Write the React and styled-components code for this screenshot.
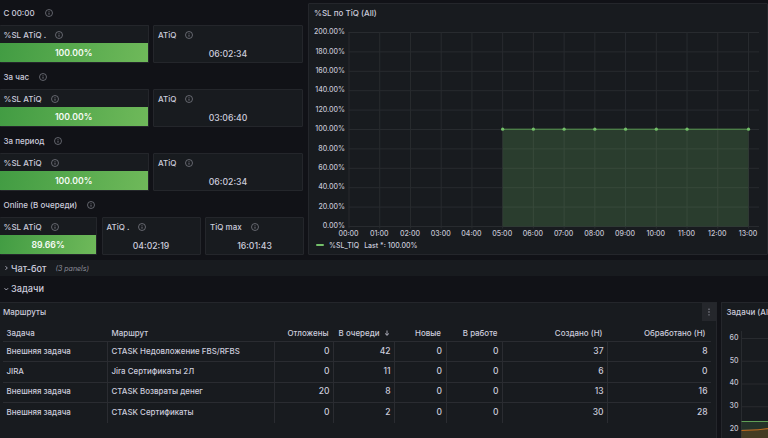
import React from "react";
import styled, { createGlobalStyle } from "styled-components";

const GlobalStyle = createGlobalStyle`
  * { box-sizing: border-box; }
  html, body { margin: 0; padding: 0; background: #111217; overflow: hidden; }
  body { font-family: Inter, "Liberation Sans", sans-serif; color: #ccccdc; }
`;

const Dashboard = styled.div`
  width: 768px;
  height: 438px;
  overflow: hidden;
  background: #111217;
  display: flex;
  flex-direction: column;
`;

const Overview = styled.section`
  display: flex;
  flex: none;
  height: 260px;
`;

const StatsColumn = styled.div`
  width: 308px;
  flex: none;
`;

const StatGroup = styled.div`
  height: 64px;
`;

const GroupTitle = styled.div`
  height: 25px;
  padding: 1px 0 0 3.5px;
  display: flex;
  align-items: center;
  gap: 10px;
  font-size: 8px;
  font-weight: 500;
  white-space: nowrap;
`;

const StatRow = styled.div`
  display: grid;
  grid-template-columns: ${(p) => (p.$three ? "97px 99px 99px" : "148.5px 150px")};
  column-gap: 4.5px;
  height: 38px;
`;

const Stat = styled.div`
  background: #181b1f;
  border: 1px solid #24262b;
  border-left-width: ${(p) => (p.$first ? 0 : 1)}px;
  border-radius: 1px;
  display: flex;
  flex-direction: column;
  overflow: hidden;
`;

const StatTitle = styled.div`
  height: 17px;
  flex: none;
  padding-left: ${(p) => (p.$first ? 3.5 : 4)}px;
  display: flex;
  align-items: center;
  gap: 9px;
  font-size: 8px;
  font-weight: 500;
  white-space: nowrap;
`;

const StatValue = styled.div`
  flex: 1;
  display: flex;
  align-items: center;
  justify-content: center;
  padding-top: ${(p) => (p.$green ? 0 : 3)}px;
  margin-bottom: ${(p) => (p.$green ? -1 : 0)}px;
  font-size: 8.7px;
  font-weight: ${(p) => (p.$green ? 600 : 500)};
  color: ${(p) => (p.$green ? "#f7fbf6" : "#ccccdc")};
  background: ${(p) => (p.$green ? "linear-gradient(100deg, #429c43, #6fb95a)" : "none")};
`;

const InfoSvg = styled.svg`
  width: 8px;
  height: 8px;
  flex: none;
  display: block;
`;

function Info() {
  return (
    <InfoSvg viewBox="0 0 8 8" fill="none" stroke="#8d8e99">
      <circle cx="4" cy="4" r="3.5" strokeWidth="0.65" />
      <path d="M4 3.6V5.7M4 2.2V2.9" strokeWidth="0.75" />
    </InfoSvg>
  );
}

const ChartPanel = styled.div`
  margin-top: 3px;
  width: 460px;
  height: 252px;
  background: #181b1f;
  border: 1px solid #24262b;
  border-radius: 1px;
`;

const PanelTitle = styled.div`
  height: 18px;
  padding-left: ${(p) => p.$pad}px;
  display: flex;
  align-items: center;
  font-size: 8px;
  font-weight: 500;
  white-space: nowrap;
`;

const Plot = styled.svg`
  display: block;
  overflow: hidden;
  font-family: Inter, "Liberation Sans", sans-serif;
  font-size: 7px;
  font-weight: 500;
  fill: #c4c4d3;
`;

const Legend = styled.div`
  display: flex;
  align-items: center;
  height: 14px;
  padding-left: 7px;
  gap: 5px;
  font-size: 7px;
  font-weight: 500;
  white-space: nowrap;
`;

const LegendMark = styled.span`
  width: 8px;
  height: 2px;
  flex: none;
  border-radius: 1px;
  background: #73bf69;
`;

const RowBar = styled.div`
  flex: none;
  height: ${(p) => (p.$open ? 26 : 16)}px;
  padding: 0 0 ${(p) => (p.$open ? 1 : 0)}px 4px;
  background: ${(p) => (p.$open ? "transparent" : "#181b1f")};
  display: flex;
  align-items: center;
  gap: 2px;
  font-size: 9.2px;
  font-weight: 500;
`;

const Chevron = styled.svg`
  width: 5px;
  height: 6px;
  flex: none;
`;

const PanelCount = styled.em`
  margin-left: 7px;
  font-size: 7px;
  font-weight: 400;
  color: #8e8f9b;
`;

const Bottom = styled.section`
  display: flex;
  gap: 4px;
  flex: 1;
  min-height: 0;
`;

const TablePanel = styled.div`
  width: 717px;
  flex: none;
  background: #181b1f;
  border: 1px solid #24262b;
  border-left: 0;
  border-bottom: 0;
`;

const TableHead = styled.div`
  display: flex;
  justify-content: space-between;
  height: 18px;
`;

const MenuButton = styled.div`
  width: 14px;
  height: 18px;
  background: #25272c;
  display: flex;
  align-items: center;
  justify-content: center;
`;

const Table = styled.div`
  margin: 4px 5px 0 3px;
`;

const Line = styled.div`
  display: grid;
  grid-template-columns: 105px 167px 59px 61px 51.5px 56.5px 105px 1fr;
  height: ${(p) => (p.$header ? 17 : 20.25)}px;
  border-bottom: ${(p) => (p.$last ? 0 : 1)}px solid #2a2c31;
`;

const Cell = styled.div`
  display: flex;
  align-items: center;
  justify-content: ${(p) => (p.$right ? "flex-end" : "flex-start")};
  padding: 0 ${(p) => (p.$header ? 5.5 : 3.5)}px ${(p) => (p.$header ? 0 : 1.5)}px 3.5px;
  border-right: ${(p) => (p.$divider ? 1 : 0)}px solid #2a2c31;
  font-size: ${(p) => (p.$number ? 8.5 : 7.95)}px;
  font-weight: 500;
  white-space: nowrap;
`;

const SortArrow = styled.svg`
  width: 6px;
  height: 6px;
  margin-left: 4px;
`;

const TasksPanel = styled.div`
  width: 60px;
  flex: none;
  background: #181b1f;
  border: 1px solid #24262b;
  border-bottom: 0;
  border-radius: 1px 0 0 0;
`;

const groups = [
  { title: "С 00:00", stats: [["%SL ATiQ .", "100.00%"], ["ATiQ", "06:02:34"]] },
  { title: "За час", stats: [["%SL ATiQ", "100.00%"], ["ATiQ", "03:06:40"]] },
  { title: "За период", stats: [["%SL ATiQ", "100.00%"], ["ATiQ", "06:02:34"]] },
  {
    title: "Online (В очереди)",
    stats: [["%SL ATiQ", "89.66%"], ["ATiQ .", "04:02:19"], ["TiQ max", "16:01:43"]],
  },
];

const headers = ["Задача", "Маршрут", "Отложены", "В очереди", "Новые", "В работе", "Создано (Н)", "Обработано (Н)"];
const rows = [
  ["Внешняя задача", "CTASK Недовложение FBS/RFBS", 0, 42, 0, 0, 37, 8],
  ["JIRA", "Jira Сертификаты 2Л", 0, 11, 0, 0, 6, 0],
  ["Внешняя задача", "CTASK Возвраты денег", 20, 8, 0, 0, 13, 16],
  ["Внешняя задача", "CTASK Сертификаты", 0, 2, 0, 0, 30, 28],
];

const hours = Array.from({ length: 14 }, (_, i) => i);
const levels = Array.from({ length: 11 }, (_, i) => i);
const hourX = (h) => 40 + h * 30.73;
const levelY = (i) => 10.5 + i * 19.4;

function SlChart() {
  return (
    <Plot width="458" height="216" viewBox="0 0 458 216">
      {levels.map((i) => (
        <React.Fragment key={i}>
          <path d={`M39.5 ${levelY(i)}H450`} stroke="#282b2f" />
          <text x="36" y={levelY(i) + 1.6} textAnchor="end">{`${200 - i * 20}.00%`}</text>
        </React.Fragment>
      ))}
      {hours.map((h) => (
        <React.Fragment key={h}>
          <path d={`M${hourX(h)} 10V206.5`} stroke="#282b2f" />
          <text x={hourX(h) - 0.5} y="214.4" textAnchor="middle">
            {`${String(h).padStart(2, "0")}:00`}
          </text>
        </React.Fragment>
      ))}
      <rect x={hourX(5)} y="107.5" width={hourX(13) - hourX(5)} height="97" fill="#73bf69" fillOpacity="0.21" />
      <path d={`M${hourX(5)} 107.2H${hourX(13)}`} stroke="#5a9b52" />
      {[5, 6, 7, 8, 9, 10, 11, 13].map((h) => (
        <circle key={h} cx={hourX(h)} cy="107.2" r="1.6" fill="#73bf69" />
      ))}
    </Plot>
  );
}

function TasksChart() {
  return (
    <Plot width="58" height="117" viewBox="0 0 58 117">
      {[60, 50, 40, 30, 20].map((v, i) => (
        <React.Fragment key={v}>
          <path d={`M19 ${17.5 + i * 22.75}H58`} stroke="#282b2f" />
          <text x="16.5" y={18.9 + i * 22.75} textAnchor="end">{v}</text>
        </React.Fragment>
      ))}
      <path d="M19.5 10V117" stroke="#282b2f" />
      <path d="M19.5 100.5H58V117H19.5Z" fill="#73bf69" fillOpacity="0.14" />
      <path d="M19.5 109.5L36 108.8L58 106V117H19.5Z" fill="#ff780a" fillOpacity="0.15" />
      <path d="M19.5 100.5H58" fill="none" stroke="#5f9f56" />
      <path d="M19.5 109.5L36 108.8L58 106" fill="none" stroke="#c06a1c" />
    </Plot>
  );
}

export default function App() {
  return (
    <Dashboard>
      <GlobalStyle />
      <Overview>
        <StatsColumn>
          {groups.map((g) => (
            <StatGroup key={g.title}>
              <GroupTitle>{g.title}<Info /></GroupTitle>
              <StatRow $three={g.stats.length === 3}>
                {g.stats.map(([name, value], i) => (
                  <Stat key={name} $first={i === 0}>
                    <StatTitle $first={i === 0}>{name}<Info /></StatTitle>
                    <StatValue $green={i === 0}>{value}</StatValue>
                  </Stat>
                ))}
              </StatRow>
            </StatGroup>
          ))}
        </StatsColumn>
        <ChartPanel>
          <PanelTitle $pad={5}>%SL по TiQ (All)</PanelTitle>
          <SlChart />
          <Legend><LegendMark /><span>%SL_TIQ</span><span>Last *: 100.00%</span></Legend>
        </ChartPanel>
      </Overview>
      <RowBar>
        <Chevron viewBox="0 0 5 6" fill="none" stroke="#ccccdc" strokeWidth="0.8"><path d="M1.5 1.2L3.3 3L1.5 4.8" /></Chevron>
        Чат-бот<PanelCount>(3 panels)</PanelCount>
      </RowBar>
      <RowBar $open>
        <Chevron viewBox="0 0 5 6" fill="none" stroke="#ccccdc" strokeWidth="0.8"><path d="M0.5 2.2L2.3 4L4.1 2.2" /></Chevron>
        Задачи
      </RowBar>
      <Bottom>
        <TablePanel>
          <TableHead>
            <PanelTitle $pad={3}>Маршруты</PanelTitle>
            <MenuButton>
              <svg width="2" height="8" viewBox="0 0 2 8" fill="#a2a3af">
                <circle cx="1" cy="1.2" r="0.65" /><circle cx="1" cy="4" r="0.65" /><circle cx="1" cy="6.8" r="0.65" />
              </svg>
            </MenuButton>
          </TableHead>
          <Table>
            <Line $header>
              {headers.map((h, i) => (
                <Cell key={h} $header $right={i > 1}>
                  {h}
                  {i === 3 && (
                    <SortArrow viewBox="0 0 6 6" fill="none" stroke="#ccccdc" strokeWidth="0.8">
                      <path d="M3 0.5V5.3M1 3.4L3 5.3L5 3.4" />
                    </SortArrow>
                  )}
                </Cell>
              ))}
            </Line>
            {rows.map((r, n) => (
              <Line key={n} $last={n === rows.length - 1}>
                {r.map((v, i) => (
                  <Cell key={i} $right={i > 1} $number={i > 1} $divider={i < 7}>{v}</Cell>
                ))}
              </Line>
            ))}
          </Table>
        </TablePanel>
        <TasksPanel>
          <PanelTitle $pad={4.5}>Задачи (All)</PanelTitle>
          <TasksChart />
        </TasksPanel>
      </Bottom>
    </Dashboard>
  );
}
